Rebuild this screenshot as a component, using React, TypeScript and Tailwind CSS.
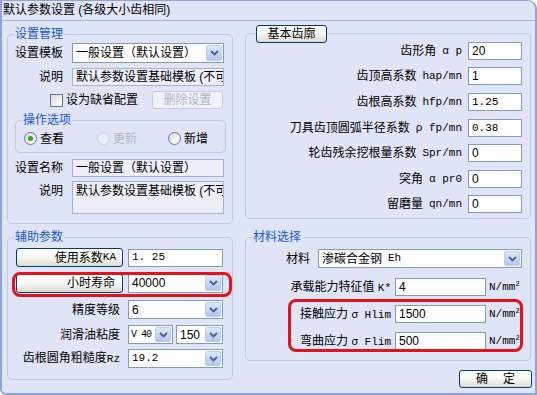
import React from 'react';

const mono = "font-['Liberation_Mono','Noto_Sans_CJK_SC',monospace] text-[11px]";

function Arrow() {
  return (
    <span className="flex w-[16px] shrink-0 items-center justify-center rounded-[2px] border border-[#bccbf0] bg-linear-to-b from-[#dde7fc] to-[#b2c5f3]">
      <svg width="9" height="6" viewBox="0 0 9 6">
        <path d="M1 1L4.5 4.5L8 1" fill="none" stroke="#4d6185" strokeWidth="1.8" />
      </svg>
    </span>
  );
}

function Combo({ children, className = '' }: { children: React.ReactNode; className?: string }) {
  return (
    <div className={`flex items-stretch border border-[#7f9db9] bg-white p-[1px] ${className}`}>
      <div className="flex min-w-0 flex-1 items-center overflow-hidden whitespace-nowrap pl-[2px] leading-none">{children}</div>
      <Arrow />
    </div>
  );
}

function Field({ children, className = '', disabled = false }: { children?: React.ReactNode; className?: string; disabled?: boolean }) {
  return (
    <div
      className={`flex items-center overflow-hidden whitespace-nowrap border pl-[3px] leading-none ${
        disabled ? 'border-[#a3b3d6] bg-[#eceff8]' : 'border-[#7f9db9] bg-white'
      } ${className}`}
    >
      {children}
    </div>
  );
}

function XpButton({ children, className = '' }: { children: React.ReactNode; className?: string }) {
  return (
    <div className={`flex items-center rounded-[3px] border border-[#003c74] bg-linear-to-b from-white via-[#f7f7f4] to-[#dcdad0] leading-none ${className}`}>
      {children}
    </div>
  );
}

function Legend({ children }: { children: React.ReactNode }) {
  return <span className="-mt-[8px] ml-[6px] block w-fit bg-[#dfe5f6] px-[1px] leading-[14px] text-[#2057d0]">{children}</span>;
}

function Radio({ label, checked = false, disabled = false }: { label: string; checked?: boolean; disabled?: boolean }) {
  return (
    <div className="flex items-center leading-none">
      <span
        className={`flex h-[13px] w-[13px] items-center justify-center rounded-full border ${
          disabled ? 'border-[#cdd3e2] bg-[#e9edf7]' : 'border-[#5f7895] bg-linear-to-br from-[#dcdbd5] to-white'
        }`}
      >
        {checked && <span className="h-[5px] w-[5px] rounded-full bg-[#2aa52a]" />}
      </span>
      <span className={`ml-[3px] ${disabled ? 'text-[#b4b7c4]' : ''}`}>{label}</span>
    </div>
  );
}

const profileRows = [
  { cn: '齿形角', sym: 'α p', value: '20', gap: 'mt-0', sans: true },
  { cn: '齿顶高系数', sym: 'hap/mn', value: '1', gap: 'mt-[7px]', sans: true },
  { cn: '齿根高系数', sym: 'hfp/mn', value: '1.25', gap: 'mt-[8px]', sans: false },
  { cn: '刀具齿顶圆弧半径系数', sym: 'ρ fp/mn', value: '0.38', gap: 'mt-[8px]', sans: false },
  { cn: '轮齿残余挖根量系数', sym: 'Spr/mn', value: '0', gap: 'mt-[7px]', sans: true },
  { cn: '突角', sym: 'α pr0', value: '0', gap: 'mt-[8px]', sans: true },
  { cn: '留磨量', sym: 'qn/mn', value: '0', gap: 'mt-[7px]', sans: true },
];

function Unit() {
  return (
    <span className={`ml-[3px] ${mono}`}>
      N/mm<sup className="text-[7px]">2</sup>
    </span>
  );
}

export default function App() {
  return (
    <div className="flex h-[395px] w-[537px] flex-col overflow-hidden rounded-tr-[9px] rounded-bl-[6px] border-x-2 border-t border-b-2 border-[#8ca4e0] bg-[#dfe5f6] text-[12px] text-black font-['Liberation_Sans','Noto_Sans_CJK_SC',sans-serif]">
      {/* title */}
      <div className="h-[20px] shrink-0 border-b border-[#aab3cb] pl-[1px] leading-[19px]">默认参数设置 (各级大小齿相同)</div>

      <div className="flex pl-[5px]">
        {/* left column */}
        <div className="flex w-[226px] flex-col">
          <div className="mt-[13px] flex h-[190px] flex-col rounded-[5px] border border-[#c2cae0]">
            <Legend>设置管理</Legend>
            <div className="mt-[2px] flex h-[20px] items-center">
              <span className="w-[55px] text-right leading-none">设置模板</span>
              <Combo className="ml-[9px] h-full w-[152px]">一般设置（默认设置）</Combo>
            </div>
            <div className="mt-[5px] flex h-[18px] items-center">
              <span className="w-[55px] text-right leading-none">说明</span>
              <Field disabled className="ml-[9px] h-full w-[152px]">默认参数设置基础模板 (不可</Field>
            </div>
            <div className="mt-[5px] flex h-[18px] items-center">
              <span className="ml-[42px] h-[13px] w-[13px] border border-[#5f7895] bg-linear-to-br from-[#dcdbd5] to-white" />
              <span className="ml-[3px] leading-none">设为缺省配置</span>
              <div className="ml-[14px] flex h-full w-[71px] items-center justify-center rounded-[3px] border border-[#c4cbe0] bg-[#eef1f9] leading-none text-[#b0b5c6]">
                删除设置
              </div>
            </div>
            <div className="mt-[11px] ml-[7px] flex h-[33px] w-[211px] flex-col rounded-[5px] border border-[#c2cae0]">
              <Legend>操作选项</Legend>
              <div className="mt-[5px] flex pl-[8px]">
                <div className="w-[73px]">
                  <Radio label="查看" checked />
                </div>
                <div className="w-[71px]">
                  <Radio label="更新" disabled />
                </div>
                <Radio label="新增" />
              </div>
            </div>
            <div className="mt-[6px] flex h-[18px] items-center">
              <span className="w-[55px] text-right leading-none">设置名称</span>
              <Field disabled className="ml-[9px] h-full w-[152px]">一般设置（默认设置）</Field>
            </div>
            <div className="mt-[4px] flex h-[33px] items-start">
              <span className="w-[55px] pt-[4px] text-right leading-none">说明</span>
              <Field disabled className="ml-[9px] h-full w-[152px] items-start! pt-[3px]">默认参数设置基础模板 (不可</Field>
            </div>
          </div>

          <div className="mt-[13px] flex h-[143px] flex-col rounded-[5px] border border-[#c2cae0]">
            <Legend>辅助参数</Legend>
            <div className="mt-[4px] flex h-[19px] items-center">
              <XpButton className="ml-[8px] h-full w-[107px] justify-end pr-[6px]">
                使用系数<span className={mono}>KA</span>
              </XpButton>
              <Field className="ml-[5px] h-[18px] w-[95px]">
                <span className={mono}>1. 25</span>
              </Field>
            </div>
            <div className="relative mt-[6px] flex h-[20px] items-center">
              <XpButton className="ml-[8px] h-[19px] w-[107px] justify-end pr-[7px]">小时寿命</XpButton>
              <Combo className="ml-[5px] h-full w-[95px]">40000</Combo>
              <div className="absolute -top-[1px] -bottom-[4px] left-[4px] right-0 rounded-[8px] border-[3px] border-[#e5121c]" />
            </div>
            <div className="mt-[7px] flex h-[19px] items-center">
              <span className="ml-[8px] w-[104px] text-right leading-none">精度等级</span>
              <Combo className="ml-[8px] h-full w-[95px]">6</Combo>
            </div>
            <div className="mt-[6px] flex h-[19px] items-center">
              <span className="ml-[8px] w-[104px] text-right leading-none">润滑油粘度</span>
              <Combo className="ml-[8px] h-full w-[45px]">
                <span className="-ml-[1px] font-['Liberation_Mono',monospace] text-[10px] tracking-[-1px]">V 40</span>
              </Combo>
              <Combo className="ml-[3px] h-full w-[47px]">150</Combo>
            </div>
            <div className="mt-[5px] flex h-[19px] items-center">
              <span className="ml-[8px] w-[104px] text-right leading-none">
                齿根圆角粗糙度<span className={mono}>Rz</span>
              </span>
              <Combo className="ml-[8px] h-full w-[95px]">
                <span className={mono}>19.2</span>
              </Combo>
            </div>
          </div>
        </div>

        {/* right column */}
        <div className="ml-[12px] flex w-[286px] flex-col">
          <div className="mt-[12px] flex h-[186px] flex-col rounded-[5px] border border-[#c2cae0]">
            <XpButton className="-mt-[9px] -mb-[1px] ml-[10px] h-[18px] w-[71px] justify-center">基本齿廓</XpButton>
            {profileRows.map((r) => (
              <div key={r.cn} className={`flex h-[18px] items-center justify-end pr-[8px] ${r.gap}`}>
                <span className="leading-none">{r.cn}</span>
                <span className={`ml-[6px] leading-none ${mono}`}>{r.sym}</span>
                <Field className="ml-[6px] h-full w-[54px]">
                  <span className={r.sans ? '' : mono}>{r.value}</span>
                </Field>
              </div>
            ))}
          </div>

          <div className="mt-[18px] flex h-[124px] flex-col rounded-[5px] border border-[#c2cae0]">
            <Legend>材料选择</Legend>
            <div className="mt-[5px] flex h-[19px] items-center">
              <span className="w-[64px] text-right leading-none">材料</span>
              <Combo className="ml-[8px] h-full w-[204px]">
                渗碳合金钢<span className={`ml-[6px] ${mono}`}>Eh</span>
              </Combo>
            </div>
            <div className="mt-[10px] flex h-[18px] items-center">
              <span className="w-[145px] text-right leading-none">
                承载能力特征值 <span className={mono}>K*</span>
              </span>
              <Field className="ml-[4px] h-full w-[91px]">4</Field>
              <Unit />
            </div>
            <div className="relative mt-[9px] flex flex-col">
              <div className="flex h-[18px] items-center">
                <span className="w-[145px] text-right leading-none">
                  接触应力 <span className={mono}>σ Hlim</span>
                </span>
                <Field className="ml-[4px] h-full w-[91px]">1500</Field>
                <Unit />
              </div>
              <div className="mt-[9px] flex h-[18px] items-center">
                <span className="w-[145px] text-right leading-none">
                  弯曲应力 <span className={mono}>σ Flim</span>
                </span>
                <Field className="ml-[4px] h-full w-[91px]">500</Field>
                <Unit />
              </div>
              <div className="absolute -top-[6px] -bottom-[2px] left-[42px] right-[7px] rounded-[8px] border-[3px] border-[#e5121c]" />
            </div>
          </div>

          <XpButton className="mt-[9px] -mr-[1px] ml-auto h-[18px] w-[73px] justify-center gap-[15px]">
            <span>确</span>
            <span>定</span>
          </XpButton>
        </div>
      </div>
    </div>
  );
}
